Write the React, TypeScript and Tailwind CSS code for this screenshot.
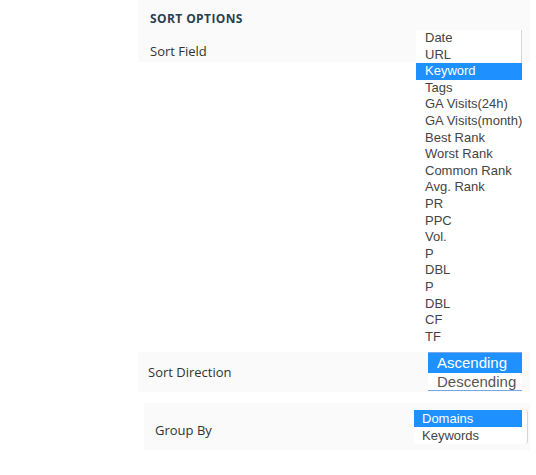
const sortFields = [
  "Date",
  "URL",
  "Keyword",
  "Tags",
  "GA Visits(24h)",
  "GA Visits(month)",
  "Best Rank",
  "Worst Rank",
  "Common Rank",
  "Avg. Rank",
  "PR",
  "PPC",
  "Vol.",
  "P",
  "DBL",
  "P",
  "DBL",
  "CF",
  "TF",
];

const SELECTED_FIELD = 2;

export default function App() {
  return (
    <div className="h-[475px] w-[536px] overflow-hidden bg-white font-['Open_Sans',sans-serif] text-[#333]">
      <div className="ml-[138px] w-[392px]">
        {/* sort field */}
        <div className="h-[62px] bg-[#fafafa] pl-3 pt-[11px]">
          <h3 className="text-[12px] font-bold leading-4 tracking-[0.4px] text-[#2c3e50]">
            SORT OPTIONS
          </h3>
          <div className="mt-[3px] flex items-start">
            <span className="mt-[13px] text-[13px] leading-4">Sort Field</span>
            <ul className="ml-auto mr-2 w-[106px] whitespace-nowrap bg-white font-['Liberation_Sans',Arial,sans-serif] text-[13px] text-[#444]">
              {sortFields.map((f, i) => (
                <li
                  key={i}
                  className={
                    i === SELECTED_FIELD
                      ? "h-[16.6px] bg-[#1e90ff] pl-[9px] leading-[16.6px] text-white"
                      : i < 2
                        ? "h-[16.6px] border-r border-[#d6d6d6] pl-[9px] leading-[16.6px]"
                        : "h-[16.6px] pl-[9px] leading-[16.6px]"
                  }
                >
                  {f}
                </li>
              ))}
            </ul>
          </div>
        </div>

        {/* sort direction */}
        <div className="mt-[290px] flex h-[40px] items-center bg-[#fafafa] pl-[10px]">
          <span className="text-[13px] leading-4">Sort Direction</span>
          <ul className="ml-auto mr-2 w-[94px] self-start whitespace-nowrap border-y border-[#7aa7e6] bg-white font-['Liberation_Sans',Arial,sans-serif] text-[15px]">
            <li className="h-[20px] bg-[#1e90ff] pl-[9px] leading-[20px] text-white">Ascending</li>
            <li className="h-[17px] pl-[9px] leading-[17px] text-[#555]">Descending</li>
          </ul>
        </div>

        {/* group by */}
        <div className="ml-[6px] mt-[11px] flex h-[47px] items-start bg-[#fafafa] pl-[11px]">
          <span className="mt-[19px] text-[13px] leading-4">Group By</span>
          <ul className="ml-auto mr-[2px] mt-[7px] w-[114px] rounded-r-[3px] border-r border-[#d5d5d5] bg-white pr-[5px] font-['Liberation_Sans',Arial,sans-serif] text-[13px] text-[#444]">
            <li className="h-[17px] bg-[#1e90ff] pl-[8px] leading-[17px] text-white">Domains</li>
            <li className="h-[17px] pl-[8px] leading-[17px]">Keywords</li>
          </ul>
        </div>
      </div>
    </div>
  );
}
